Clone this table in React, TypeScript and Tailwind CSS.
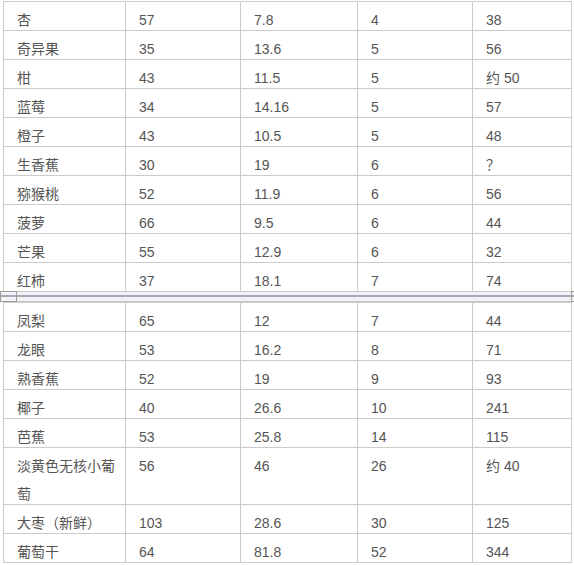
const font = { fontFamily: '"Liberation Sans", "Noto Sans CJK SC", sans-serif' };

type Row = [string, string, string, string, string];

const upper: Row[] = [
  ['杏', '57', '7.8', '4', '38'],
  ['奇异果', '35', '13.6', '5', '56'],
  ['柑', '43', '11.5', '5', '约 50'],
  ['蓝莓', '34', '14.16', '5', '57'],
  ['橙子', '43', '10.5', '5', '48'],
  ['生香蕉', '30', '19', '6', '？'],
  ['猕猴桃', '52', '11.9', '6', '56'],
  ['菠萝', '66', '9.5', '6', '44'],
  ['芒果', '55', '12.9', '6', '32'],
  ['红柿', '37', '18.1', '7', '74'],
];

const lower: Row[] = [
  ['凤梨', '65', '12', '7', '44'],
  ['龙眼', '53', '16.2', '8', '71'],
  ['熟香蕉', '52', '19', '9', '93'],
  ['椰子', '40', '26.6', '10', '241'],
  ['芭蕉', '53', '25.8', '14', '115'],
  ['淡黄色无核小葡萄', '56', '46', '26', '约 40'],
  ['大枣（新鲜）', '103', '28.6', '30', '125'],
  ['葡萄干', '64', '81.8', '52', '344'],
];

function Segment({ rows }: { rows: Row[] }) {
  return (
    <div className="ml-[3px] w-[569px] border-l border-t border-[#cbcbcb] grid grid-cols-[122px_115px_117px_115px_99px]">
      {rows.map((row, i) => {
        const tall = row[0].length > 7;
        return row.map((cell, j) => (
          <div
            key={`${i}-${j}`}
            className={`${tall ? 'h-[57px]' : 'h-[29px]'} border-r border-b border-[#cbcbcb] pl-[13px] pr-[2px] pt-[4px] leading-[28px] text-[14px] text-[#555] overflow-visible`}
          >
            <div className={tall ? '' : 'whitespace-nowrap'}>{cell}</div>
          </div>
        ));
      })}
    </div>
  );
}

export default function App() {
  return (
    <div className="w-[574px] h-[565px] bg-white overflow-hidden pt-[1px]" style={font}>
      <Segment rows={upper} />

      {/* table split handle */}
      <div className="relative h-[10px] w-full flex flex-col">
        <div className="h-[3px] bg-[#f3f3f5]" />
        <div className="h-[2px] bg-[#a8a8b6]" />
        <div className="h-[4px] bg-[#f3f3f5]" />
        <div className="h-[1px] bg-[#c6c6c6]" />
        <div className="absolute left-0 top-[-1px] w-[17px] h-[11px] border border-[#9c9c9c]" />
        <div className="absolute right-0 top-[-1px] w-[3px] h-[11px] border-y border-l border-[#9c9c9c]" />
      </div>

      <Segment rows={lower} />
    </div>
  );
}
